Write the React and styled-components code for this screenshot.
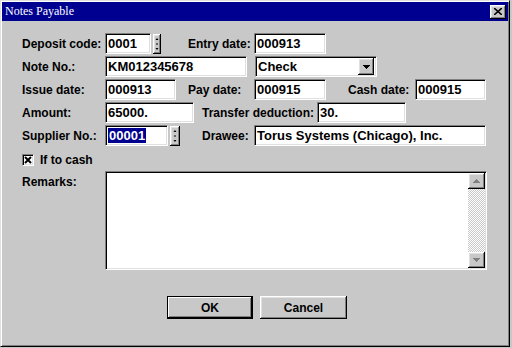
import React from "react";
import styled, { createGlobalStyle } from "styled-components";

const FACE = "#c8c8c8";
const NAVY = "#000090";

const Global = createGlobalStyle`
  body {
    margin: 0;
    background: ${FACE};
    font-family: "Liberation Sans", Arial, sans-serif;
  }
`;

const Window = styled.div`
  width: 510px;
  height: 347px;
  box-sizing: border-box;
  background: ${FACE};
  border-top: 1px solid #e0e0e0;
  border-left: 1px solid #e0e0e0;
  border-right: 1px solid #000;
  border-bottom: 1px solid #000;
  box-shadow: inset 1px 1px #fff, inset -1px -1px #808080;
  padding: 1px;
  display: flex;
  flex-direction: column;
`;

const TitleBar = styled.div`
  height: 19px;
  background: ${NAVY};
  display: flex;
  align-items: center;
  justify-content: space-between;
  padding: 0 2px 0 3px;
`;

const Title = styled.span`
  color: #fff;
  font-family: "Liberation Serif", "Times New Roman", serif;
  font-size: 12px;
`;

const raised = `
  background: ${FACE};
  box-shadow: inset -1px -1px #000, inset 1px 1px #fff, inset -2px -2px #808080, inset 2px 2px #e0e0e0;
`;

const sunken = `
  background: #fff;
  border-top: 1px solid #808080;
  border-left: 1px solid #808080;
  border-right: 1px solid #fff;
  border-bottom: 1px solid #fff;
  box-shadow: inset 1px 1px #000, inset -1px -1px #e0e0e0;
`;

const CloseButton = styled.div`
  ${raised}
  width: 16px;
  height: 14px;
  display: flex;
  align-items: center;
  justify-content: center;
`;

const Body = styled.div`
  flex: 1;
  display: flex;
  flex-direction: column;
  padding: 12px 0 0 20px;
`;

const Row = styled.div`
  display: flex;
  align-items: center;
  height: 21px;
  margin-bottom: 2px;
`;

const Label = styled.span`
  width: ${(p) => p.$w || 83}px;
  margin-left: ${(p) => p.$ml || 0}px;
  font-size: 12px;
  font-weight: bold;
  white-space: nowrap;
  color: #000;
  padding-top: ${(p) => p.$pt || 0}px;
`;

const Field = styled.div`
  ${sunken}
  box-sizing: border-box;
  width: ${(p) => p.$w}px;
  height: 21px;
  margin-left: ${(p) => p.$ml || 0}px;
  display: flex;
  align-items: center;
  padding-left: 2px;
  font-size: 13px;
  font-weight: bold;
  color: #000;
  white-space: nowrap;
  overflow: hidden;
`;

const Selected = styled.span`
  background: ${NAVY};
  color: #fff;
  padding: 0 1px;
  line-height: 15px;
`;

const Spin = styled.div`
  ${raised}
  width: ${(p) => p.$w}px;
  height: 20px;
  margin-left: 2px;
  display: flex;
`;

const Combo = styled(Field)`
  justify-content: space-between;
  padding-right: 2px;
`;

const DropButton = styled.div`
  ${raised}
  width: 16px;
  height: 17px;
  display: flex;
  align-items: center;
  justify-content: center;
`;

const CheckRow = styled.div`
  display: flex;
  align-items: center;
  margin-top: 6px;
  height: 11px;
  gap: 6px;
  font-size: 12px;
  font-weight: bold;
`;

const CheckBox = styled.div`
  ${sunken}
  box-sizing: border-box;
  width: 12px;
  height: 12px;
  display: flex;
  align-items: center;
  justify-content: center;
`;

const RemarksRow = styled.div`
  display: flex;
  align-items: flex-start;
  margin-top: 6px;
`;

const TextArea = styled.div`
  ${sunken}
  box-sizing: border-box;
  width: 382px;
  height: 99px;
  display: flex;
  justify-content: flex-end;
  padding: 1px;
`;

const ScrollBar = styled.div`
  width: 17px;
  display: flex;
  flex-direction: column;
  justify-content: space-between;
  background: repeating-conic-gradient(#fff 0 25%, ${FACE} 0 50%) 0 0 / 2px 2px;
`;

const ScrollButton = styled.div`
  ${raised}
  height: 16px;
  display: flex;
  align-items: center;
  justify-content: center;
`;

const ButtonRow = styled.div`
  display: flex;
  gap: 7px;
  margin-top: 26px;
  padding-left: 145px;
`;

const Button = styled.div`
  ${raised}
  box-sizing: border-box;
  width: ${(p) => p.$w}px;
  height: 23px;
  display: flex;
  align-items: center;
  justify-content: center;
  font-size: 12px;
  font-weight: bold;
  ${(p) =>
    p.$default &&
    `box-shadow: inset 0 0 0 1px #000, inset -2px -2px #000, inset 2px 2px #fff, inset -3px -3px #808080;`}
`;

const Arrow = ({ dir, color = "#000", size = 7 }) => {
  const h = Math.ceil(size / 2);
  const pts = dir === "up" ? `0,${h} ${size},${h} ${size / 2},0` : `0,0 ${size},0 ${size / 2},${h}`;
  return (
    <svg width={size} height={h} style={{ display: "block" }}>
      <polygon points={pts} fill={color} shapeRendering="crispEdges" />
    </svg>
  );
};

const SpinArrows = () => (
  <svg width="100%" height="20" viewBox="0 0 8 20" preserveAspectRatio="xMidYMid meet">
    <polygon points="2.5,6 5.5,6 4,4" fill="#000" />
    <rect x="3.5" y="9" width="1" height="2" fill="#000" />
    <polygon points="2.5,14 5.5,14 4,16" fill="#000" />
  </svg>
);

export default function App() {
  return (
    <>
      <Global />
      <Window>
        <TitleBar>
          <Title>Notes Payable</Title>
          <CloseButton>
            <svg width="8" height="7" viewBox="0 0 8 7">
              <path d="M0 0 L8 7 M8 0 L0 7" stroke="#000" strokeWidth="1.6" />
            </svg>
          </CloseButton>
        </TitleBar>
        <Body>
          <Row>
            <Label>Deposit code:</Label>
            <Field $w={46}>0001</Field>
            <Spin $w={8}>
              <SpinArrows />
            </Spin>
            <Label $ml={27} $w={66}>Entry date:</Label>
            <Field $w={72}>000913</Field>
          </Row>
          <Row>
            <Label>Note No.:</Label>
            <Field $w={142}>KM012345678</Field>
            <Combo $w={122} $ml={8}>
              <span>Check</span>
              <DropButton>
                <Arrow dir="down" />
              </DropButton>
            </Combo>
          </Row>
          <Row>
            <Label>Issue date:</Label>
            <Field $w={71}>000913</Field>
            <Label $ml={12} $w={66}>Pay date:</Label>
            <Field $w={72}>000915</Field>
            <Label $ml={22} $w={67}>Cash date:</Label>
            <Field $w={71}>000915</Field>
          </Row>
          <Row>
            <Label>Amount:</Label>
            <Field $w={89}>65000.</Field>
            <Label $ml={8} $w={115}>Transfer deduction:</Label>
            <Field $w={89}>30.</Field>
          </Row>
          <Row>
            <Label>Supplier No.:</Label>
            <Field $w={63}>
              <Selected>00001</Selected>
            </Field>
            <Spin $w={10}>
              <SpinArrows />
            </Spin>
            <Label $ml={22} $w={52}>Drawee:</Label>
            <Field $w={232}>Torus Systems (Chicago), Inc.</Field>
          </Row>
          <CheckRow>
            <CheckBox>
              <svg width="8" height="8" viewBox="0 0 8 8">
                <path d="M1 1 L7 7 M7 1 L1 7" stroke="#000" strokeWidth="2" />
              </svg>
            </CheckBox>
            <span>If to cash</span>
          </CheckRow>
          <RemarksRow>
            <Label $pt={4}>Remarks:</Label>
            <TextArea>
              <ScrollBar>
                <ScrollButton>
                  <Arrow dir="up" color="#808080" />
                </ScrollButton>
                <ScrollButton>
                  <Arrow dir="down" color="#808080" />
                </ScrollButton>
              </ScrollBar>
            </TextArea>
          </RemarksRow>
          <ButtonRow>
            <Button $w={86} $default>OK</Button>
            <Button $w={87}>Cancel</Button>
          </ButtonRow>
        </Body>
      </Window>
    </>
  );
}
